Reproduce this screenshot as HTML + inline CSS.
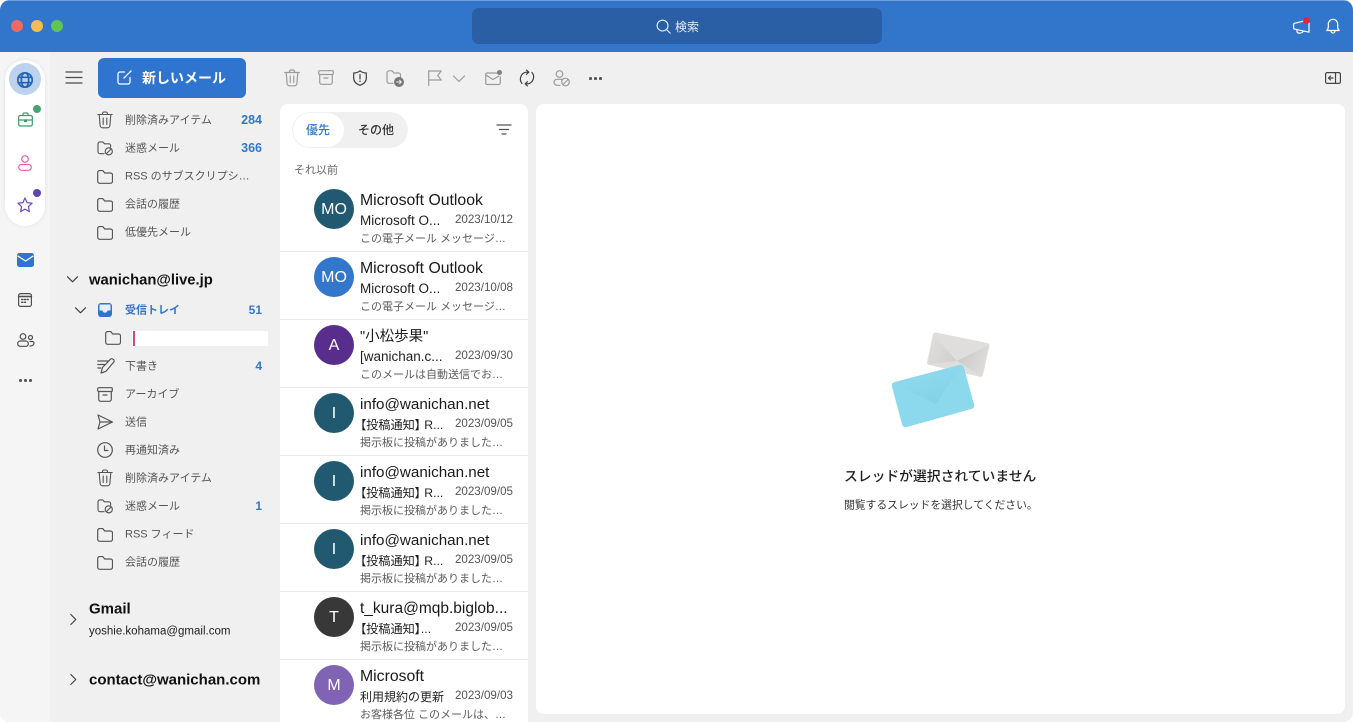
<!DOCTYPE html>
<html lang="ja"><head><meta charset="utf-8"><title>Outlook</title>
<style>
*{box-sizing:border-box}
html,body{margin:0;padding:0;width:1353px;height:722px;overflow:hidden;background:#fff;font-family:"Liberation Sans","Noto Sans CJK JP",sans-serif}
#win{position:absolute;left:0;top:0;width:1353px;height:722px;background:#f0f0f0;border-radius:10px;overflow:hidden}
.a{position:absolute;white-space:nowrap}
.t{position:absolute;white-space:nowrap;transform:translateY(-50%);line-height:1}
svg.i{position:absolute;fill:none;stroke:#555;stroke-width:1.2;stroke-linecap:round;stroke-linejoin:round;overflow:visible}
.l{font-size:11px;color:#555;left:125px;margin-top:.7px}
.n{font-size:12.5px;font-weight:700;color:#3277cc;right:1091px}
.row{position:absolute;left:280px;width:248px;height:68px;background:#fff}
.row:after{content:"";position:absolute;left:0;top:67px;width:248px;height:1.5px;background:#e9e9e9}
.row.e:after{display:none}
.av{position:absolute;left:34px;top:5px;width:40px;height:40px;border-radius:50%;color:#fff;font-size:16px;text-align:center;line-height:41px}
.nm{position:absolute;left:80px;top:7px;font-size:15.8px;line-height:20px;color:#1a1a1a;white-space:nowrap}
.nm.s{font-size:15.200px}
.sb{position:absolute;left:80px;top:26.500px;font-size:13.500px;line-height:20px;color:#1f1f1f;white-space:nowrap}
.sb.j{font-size:12.200px;font-feature-settings:"palt"}
.dt{position:absolute;right:15px;top:27px;font-size:11.6px;line-height:18px;color:#555;white-space:nowrap}
.pv{position:absolute;left:80px;top:46.500px;font-size:11px;line-height:16px;color:#5c5c5c;white-space:nowrap}
</style></head><body>
<svg width="0" height="0" style="position:absolute"><defs>
<symbol id="folder" viewBox="0 0 16 14"><path d="M.7 2.500a2 2 0 0 1 2-2h3l2 2.500h5.800a2 2 0 0 1 2 2v6.300a2 2 0 0 1-2 2H2.700a2 2 0 0 1-2-2z"/></symbol>
<symbol id="trash" viewBox="0 0 16 18"><path d="M.8 3.500h14.400M5.500 3.500V2.500a1.700 1.700 0 0 1 1.700-1.500h1.600a1.700 1.700 0 0 1 1.700 1.500v1M2.200 3.500l.9 11a2.500 2.500 0 0 0 2.500 2.300h4.800a2.500 2.500 0 0 0 2.500-2.300l.9-11M6.200 7v6.500M9.800 7v6.500"/></symbol>
<symbol id="junk" viewBox="0 0 18 16"><path d="M7.500 13.500H3a2 2 0 0 1-2-2V3a2 2 0 0 1 2-2h3l2 2h4.500a2 2 0 0 1 2 2v1.500"/><circle cx="12.500" cy="11" r="3.800"/><path d="M10 13.500l5-5"/></symbol>
<symbol id="archive" viewBox="0 0 16 15"><rect x=".7" y=".7" width="14.600" height="3.800" rx="1"/><path d="M1.700 4.500v7.800a2 2 0 0 0 2 2h8.600a2 2 0 0 0 2-2V4.500M6 8h4"/></symbol>
</defs></svg>
<div id="win">
<div class="a" style="left:0;top:0;width:1353px;height:52px;background:#3276cc;border-top:1px solid #6f9fdc"></div>
<div class="a" style="left:11px;top:20px;width:12px;height:12px;border-radius:50%;background:#ee6a5e"></div>
<div class="a" style="left:31px;top:20px;width:12px;height:12px;border-radius:50%;background:#f5bd4f"></div>
<div class="a" style="left:51px;top:20px;width:12px;height:12px;border-radius:50%;background:#61c554"></div>
<div class="a" style="left:472px;top:8px;width:410px;height:36px;border-radius:7px;background:#2a5ea5"></div>
<svg class="i" style="left:656px;top:19px;stroke:#e8eef8;stroke-width:1.200" width="15" height="15" viewBox="0 0 16 16"><circle cx="7" cy="7" r="5.800"/><path d="M11.200 11.200l4 4"/></svg>
<div class="t" style="left:675px;top:26.500px;font-size:12px;color:#e8eef8">検索</div>
<svg class="i" style="left:1293px;top:19px;stroke:#fff" width="17" height="15" viewBox="0 0 17 15"><path d="M2 4.200L16 .8v12.400L2 10.200A1.500 1.500 0 0 1 .6 8.700V5.700A1.500 1.500 0 0 1 2 4.200zM4 10.800c-.3 2 .3 3 1.500 3.200 1.800.3 4-.2 4.700-1.800"/></svg>
<div class="a" style="left:1303px;top:17px;width:7px;height:7px;border-radius:50%;background:#d9274a"></div>
<svg class="i" style="left:1326px;top:18px;stroke:#fff" width="14" height="16" viewBox="0 0 14 16"><path d="M.8 12.500c1.200-1 1.500-2 1.500-3.500V6a4.700 4.700 0 0 1 9.400 0v3c0 1.500.3 2.500 1.500 3.500zM5 12.800c0 3 4 3 4 0"/></svg>

<!-- rail -->
<div class="a" style="left:0;top:52px;width:50px;height:670px;background:#f5f5f5"></div>
<div class="a" style="left:5px;top:60px;width:40px;height:166px;border-radius:20px;background:#fff;box-shadow:0 0 4px rgba(0,0,0,.08)"></div>
<div class="a" style="left:9px;top:63px;width:32px;height:32px;border-radius:50%;background:#bdd2ee"></div>
<svg class="i" style="left:17px;top:72px;stroke:#2265b8;stroke-width:1.700" width="16" height="16" viewBox="0 0 16 16"><circle cx="8" cy="8" r="7.200"/><ellipse cx="8" cy="8" rx="3.700" ry="7.200"/><path d="M1.200 5.300h13.600M1.200 10.700h13.600"/></svg>
<svg class="i" style="left:18px;top:112px;stroke:#3c9c6c" width="15" height="15" viewBox="0 0 15 15"><rect x=".7" y="3.500" width="13.600" height="10.500" rx="1.500"/><path d="M5 3.500V2a1 1 0 0 1 1-1h3a1 1 0 0 1 1 1v1.500M.7 8h13.600"/><path d="M6.500 8h2v1.500h-2z" fill="#3c9c6c"/></svg>
<div class="a" style="left:33px;top:105px;width:8px;height:8px;border-radius:50%;background:#41a673"></div>
<svg class="i" style="left:18px;top:155px;stroke:#e85fb0" width="14" height="16" viewBox="0 0 14 16"><circle cx="7" cy="4" r="3.300"/><rect x=".7" y="9.500" width="12.600" height="5.800" rx="2.900"/></svg>
<svg class="i" style="left:17px;top:197px;stroke:#6a4bbd" width="16" height="16" viewBox="0 0 16 16"><path d="M8 1l2.100 4.600 5 .6-3.700 3.400 1 5L8 12.100 3.600 14.600l1-5L.9 6.200l5-.6z"/></svg>
<div class="a" style="left:33px;top:189px;width:8px;height:8px;border-radius:50%;background:#6245b0"></div>
<svg style="position:absolute;left:17px;top:253px" width="17" height="14" viewBox="0 0 17 14"><rect width="17" height="14" rx="2.500" fill="#2f74cf"/><path d="M.5 2.800l8 5.200 8-5.200" fill="none" stroke="#f5f5f5" stroke-width="1.300"/></svg>
<svg class="i" style="left:18px;top:293px;stroke:#4f4f4f" width="14" height="14" viewBox="0 0 14 14"><rect x=".6" y=".6" width="12.800" height="12.800" rx="2"/><path d="M.6 3.500h12.800" stroke-width="1.600"/><path d="M3.800 6.500h1M6.500 6.500h1M9.200 6.500h1M3.800 9.300h1M6.500 9.300h1" stroke-width="1.500"/></svg>
<svg class="i" style="left:17px;top:333px;stroke:#4f4f4f" width="18" height="14" viewBox="0 0 18 14"><circle cx="6" cy="3.500" r="2.800"/><rect x=".7" y="8" width="10.600" height="5.300" rx="2.600"/><circle cx="13.500" cy="4.500" r="2"/><path d="M13 8.500h2.500a1.500 1.500 0 0 1 1.500 1.500c0 1.800-1.500 3-4 3"/></svg>
<div class="a" style="left:19px;top:379px;width:2.600px;height:2.600px;border-radius:50%;background:#555;box-shadow:5px 0 #555,10px 0 #555"></div>

<!-- top of sidebar -->
<svg class="i" style="left:66px;top:71px;stroke:#4a4a4a" width="16" height="13" viewBox="0 0 16 13"><path d="M0 1h16M0 6.500h16M0 12h16"/></svg>
<div class="a" style="left:98px;top:58px;width:148px;height:40px;border-radius:6px;background:#2f74cf"></div>
<svg class="i" style="left:117px;top:70px;stroke:#fff;stroke-width:1.300" width="15" height="15" viewBox="0 0 15 15"><path d="M7.500 2H3a2 2 0 0 0-2 2v8a2 2 0 0 0 2 2h8a2 2 0 0 0 2-2V7.500M14 1L7 8"/></svg>
<div class="t" style="left:142px;top:78px;font-size:14px;font-weight:700;color:#fff">新しいメール</div>

<svg class="i" style="left:97px;top:111px;stroke-width:1.100" width="16" height="18" viewBox="0 0 16 18"><use href="#trash"/></svg>
<div class="t l" style="top:120.500px">削除済みアイテム</div><div class="t n" style="top:120px">284</div>
<svg class="i" style="left:97px;top:141px" width="17" height="15" viewBox="0 0 18 16"><use href="#junk"/></svg>
<div class="t l" style="top:148.500px">迷惑メール</div><div class="t n" style="top:148px">366</div>
<svg class="i" style="left:97px;top:170px" width="16" height="14" viewBox="0 0 16 14"><use href="#folder"/></svg>
<div class="t l" style="top:176.500px">RSS のサブスクリプシ…</div>
<svg class="i" style="left:97px;top:198px" width="16" height="14" viewBox="0 0 16 14"><use href="#folder"/></svg>
<div class="t l" style="top:204.500px">会話の履歴</div>
<svg class="i" style="left:97px;top:226px" width="16" height="14" viewBox="0 0 16 14"><use href="#folder"/></svg>
<div class="t l" style="top:232.500px">低優先メール</div>

<svg class="i" style="left:67px;top:276px;stroke:#444" width="11" height="7" viewBox="0 0 11 7"><path d="M.5.800l5 5 5-5"/></svg>
<div class="t" style="left:89px;top:280.500px;font-size:14.800px;font-weight:700;color:#111">wanichan@live.jp</div>
<svg class="i" style="left:75px;top:307px;stroke:#444" width="11" height="7" viewBox="0 0 11 7"><path d="M.5.800l5 5 5-5"/></svg>
<svg style="position:absolute;left:98px;top:303px" width="14" height="14" viewBox="0 0 14 14"><rect width="14" height="14" rx="3" fill="#2f74cf"/><path d="M1.500 1.500h11v6H9.500a2.500 2.200 0 0 1-5 0H1.500z" fill="#e6eef9"/></svg>
<div class="t" style="left:125px;top:311px;font-size:11px;font-weight:700;color:#3277cc">受信トレイ</div><div class="t n" style="top:310px;font-size:12px">51</div>
<svg class="i" style="left:105px;top:331px" width="16" height="14" viewBox="0 0 16 14"><use href="#folder"/></svg>
<div class="a" style="left:132px;top:331px;width:136px;height:15px;background:#fff"></div>
<div class="a" style="left:133px;top:331px;width:1.500px;height:15px;background:#d6457f"></div>
<svg class="i" style="left:97px;top:358px" width="17" height="16" viewBox="0 0 17 16"><path d="M.8 3h10M.8 6.500h6.500M.8 10h3M15.800 1.200a1.600 1.600 0 0 0-2.300 0L5.500 9.500l-1.500 5.500 5-1.700 7.800-9.300a1.800 1.800 0 0 0-1-2.800z"/></svg>
<div class="t l" style="top:366.500px">下書き</div><div class="t n" style="top:366px;font-size:12px">4</div>
<svg class="i" style="left:97px;top:387px" width="16" height="15" viewBox="0 0 16 15"><use href="#archive"/></svg>
<div class="t l" style="top:394.500px">アーカイブ</div>
<svg class="i" style="left:97px;top:414px" width="16" height="16" viewBox="0 0 16 16"><path d="M1 1l14.500 7L1 15l2-7zM3 8h12.500"/></svg>
<div class="t l" style="top:422.500px">送信</div>
<svg class="i" style="left:97px;top:442px" width="16" height="16" viewBox="0 0 16 16"><circle cx="8" cy="8" r="7.300"/><path d="M7.500 4v4.500h3.500"/></svg>
<div class="t l" style="top:450.500px">再通知済み</div>
<svg class="i" style="left:97px;top:469px;stroke-width:1.100" width="16" height="18" viewBox="0 0 16 18"><use href="#trash"/></svg>
<div class="t l" style="top:478.500px">削除済みアイテム</div>
<svg class="i" style="left:97px;top:499px" width="17" height="15" viewBox="0 0 18 16"><use href="#junk"/></svg>
<div class="t l" style="top:506.500px">迷惑メール</div><div class="t n" style="top:506px;font-size:12px">1</div>
<svg class="i" style="left:97px;top:528px" width="16" height="14" viewBox="0 0 16 14"><use href="#folder"/></svg>
<div class="t l" style="top:534.500px">RSS フィード</div>
<svg class="i" style="left:97px;top:556px" width="16" height="14" viewBox="0 0 16 14"><use href="#folder"/></svg>
<div class="t l" style="top:562.500px">会話の履歴</div>
<svg class="i" style="left:70px;top:614px;stroke:#444" width="6" height="11" viewBox="0 0 6 11"><path d="M.8.500l5 5-5 5"/></svg>
<div class="t" style="left:89px;top:609px;font-size:15px;font-weight:700;color:#111">Gmail</div>
<div class="t" style="left:89px;top:632px;font-size:11.500px;color:#222">yoshie.kohama@gmail.com</div>
<svg class="i" style="left:70px;top:674px;stroke:#444" width="6" height="11" viewBox="0 0 6 11"><path d="M.8.500l5 5-5 5"/></svg>
<div class="t" style="left:89px;top:680px;font-size:15px;font-weight:700;color:#111">contact@wanichan.com</div>

<!-- toolbar -->
<svg class="i" style="left:284px;top:69px;stroke:#9b9b9b" width="16" height="18" viewBox="0 0 16 18"><use href="#trash"/></svg>
<svg class="i" style="left:318px;top:70px;stroke:#9b9b9b" width="16" height="15" viewBox="0 0 16 15"><use href="#archive"/></svg>
<svg class="i" style="left:353px;top:70px;stroke:#3f3f3f" width="14" height="16" viewBox="0 0 14 16"><path d="M7 .8c1.500 1.300 3.700 2.100 6.300 2.200v5c0 3.500-2.500 6-6.300 7.300C3.200 14 .7 11.500.7 8V3C3.300 2.900 5.500 2.100 7 .8zM7 4.500v4.500M7 11v.6"/></svg>
<svg class="i" style="left:386px;top:70px;stroke:#9b9b9b" width="16" height="14" viewBox="0 0 16 14"><path d="M7 13.300H3a2 2 0 0 1-2-2V2.800a2 2 0 0 1 2-2h3l2 2.200h4.500a2 2 0 0 1 2 2v2"/></svg>
<svg style="position:absolute;left:394px;top:77px" width="10" height="10" viewBox="0 0 10 10"><circle cx="5" cy="5" r="5" fill="#777"/><path d="M2.300 5h5M5.300 3l2 2-2 2" fill="none" stroke="#f0f0f0" stroke-width="1"/></svg>
<svg class="i" style="left:428px;top:70px;stroke:#9b9b9b" width="14" height="16" viewBox="0 0 14 16"><path d="M.7 15.500V1h12.500l-3.500 4.500 3.500 4.500H.7"/></svg>
<svg class="i" style="left:453px;top:75px;stroke:#9b9b9b" width="12" height="8" viewBox="0 0 12 8"><path d="M.5 1l5.500 5.500L11.500 1"/></svg>
<svg class="i" style="left:485px;top:71px;stroke:#9b9b9b" width="16" height="14" viewBox="0 0 16 14"><path d="M15.300 6v6a1.500 1.500 0 0 1-1.500 1.500H2.200A1.500 1.500 0 0 1 .7 12V3.500A1.500 1.500 0 0 1 2.200 2h9.800M.9 4l7 4.500L14 5"/></svg>
<div class="a" style="left:497px;top:70px;width:5px;height:5px;border-radius:50%;background:#808080"></div>
<svg class="i" style="left:519px;top:69px;stroke:#3f3f3f" width="16" height="18" viewBox="0 0 16 18"><path d="M3 14.500a7 7 0 0 1 4-11.300h2M13 3.500a7 7 0 0 1-4 11.300H7M7.500 1L9.800 3.200 7.500 5.300M8.500 12.700L6.200 14.800l2.300 2.200"/></svg>
<svg class="i" style="left:553px;top:70px;stroke:#9b9b9b" width="17" height="17" viewBox="0 0 17 17"><circle cx="6.500" cy="4" r="3.300"/><path d="M7 15.300H4a3 3 0 0 1 0-6h5"/><circle cx="12.500" cy="12" r="3.800"/><path d="M10 14.500l5-5"/></svg>
<div class="a" style="left:589px;top:77px;width:2.600px;height:2.600px;border-radius:50%;background:#555;box-shadow:5px 0 #555,10px 0 #555"></div>
<svg class="i" style="left:1325px;top:72px;stroke:#444" width="16" height="12" viewBox="0 0 16 12"><rect x=".6" y=".6" width="14.800" height="10.800" rx="1.500"/><path d="M10.500.6v10.800"/><path d="M8 6H3.500M5.500 4L3.500 6l2 2"/></svg>

<!-- list panel -->
<div class="a" style="left:280px;top:104px;width:248px;height:618px;background:#fff;border-radius:8px 8px 0 0"></div>
<div class="a" style="left:292px;top:112px;width:116px;height:36px;border-radius:18px;background:#f0f0f0"></div>
<div class="a" style="left:293px;top:113px;width:51px;height:34px;border-radius:17px;background:#fff"></div>
<div class="t" style="left:306px;top:130px;font-size:12px;font-weight:500;color:#3277cc">優先</div>
<div class="t" style="left:358px;top:130px;font-size:12px;font-weight:500;color:#333">その他</div>
<svg class="i" style="left:497px;top:124px;stroke:#555;stroke-width:1.300" width="14" height="11" viewBox="0 0 14 11"><path d="M0 1h14M2.500 5.500h9M5 10h4"/></svg>
<div class="t" style="left:294px;top:170.500px;font-size:11px;color:#666">それ以前</div>

<div class="row" style="top:184px"><div class="av" style="background:#215a70">MO</div><div class="nm">Microsoft Outlook</div><div class="sb">Microsoft O...</div><div class="dt">2023/10/12</div><div class="pv">この電子メール メッセージ…</div></div>
<div class="row" style="top:252px"><div class="av" style="background:#3277cc">MO</div><div class="nm">Microsoft Outlook</div><div class="sb">Microsoft O...</div><div class="dt">2023/10/08</div><div class="pv">この電子メール メッセージ…</div></div>
<div class="row" style="top:320px"><div class="av" style="background:#592d8c">A</div><div class="nm" style="font-size:14.500px">"小松歩果"</div><div class="sb">[wanichan.c...</div><div class="dt">2023/09/30</div><div class="pv">このメールは自動送信でお…</div></div>
<div class="row" style="top:388px"><div class="av" style="background:#215a70">I</div><div class="nm s">info@wanichan.net</div><div class="sb j">【投稿通知】 R...</div><div class="dt">2023/09/05</div><div class="pv">掲示板に投稿がありました…</div></div>
<div class="row" style="top:456px"><div class="av" style="background:#215a70">I</div><div class="nm s">info@wanichan.net</div><div class="sb j">【投稿通知】 R...</div><div class="dt">2023/09/05</div><div class="pv">掲示板に投稿がありました…</div></div>
<div class="row" style="top:524px"><div class="av" style="background:#215a70">I</div><div class="nm s">info@wanichan.net</div><div class="sb j">【投稿通知】 R...</div><div class="dt">2023/09/05</div><div class="pv">掲示板に投稿がありました…</div></div>
<div class="row" style="top:592px"><div class="av" style="background:#383838">T</div><div class="nm" style="font-size:15.500px">t_kura@mqb.biglob...</div><div class="sb j">【投稿通知】...</div><div class="dt">2023/09/05</div><div class="pv">掲示板に投稿がありました…</div></div>
<div class="row e" style="top:660px"><div class="av" style="background:#8063b5">M</div><div class="nm">Microsoft</div><div class="sb" style="font-size:12px">利用規約の更新</div><div class="dt">2023/09/03</div><div class="pv">お客様各位 このメールは、…</div></div>

<!-- reading pane -->
<div class="a" style="left:536px;top:104px;width:809px;height:610px;background:#fff;border-radius:8px"></div>
<svg style="position:absolute;left:885px;top:328px" width="112" height="106" viewBox="0 0 112 106">
<defs>
<linearGradient id="g1" x1="72" y1="32" x2="48" y2="12" gradientUnits="userSpaceOnUse"><stop offset="0" stop-color="#d0cfcd"/><stop offset="1" stop-color="#dedddb"/></linearGradient>
<linearGradient id="g2" x1="72" y1="32" x2="100" y2="44" gradientUnits="userSpaceOnUse"><stop offset="0" stop-color="#cbcac8"/><stop offset="1" stop-color="#dedddb"/></linearGradient>
<linearGradient id="g3" x1="51" y1="76" x2="42" y2="48" gradientUnits="userSpaceOnUse"><stop offset="0" stop-color="#82d2e7"/><stop offset="1" stop-color="#8cd8ec"/></linearGradient>
</defs>
<path d="M50.500 7L102 17.500 95.500 46.500 44.500 34.500z" fill="#dfdedc" stroke="#dfdedc" stroke-width="5" stroke-linejoin="round"/>
<path d="M48 6L72 33 43 36z" fill="url(#g1)"/>
<path d="M103.500 17L72 33 96 48z" fill="url(#g2)"/>
<path d="M10.300 57.500L75.500 40.300 85.700 77.500 20.500 95.700z" fill="#8cd8ec" stroke="#8cd8ec" stroke-width="7" stroke-linejoin="round"/>
<path d="M7 55.500L51 76 77 37z" fill="url(#g3)"/>
</svg>
<div class="t" style="left:844px;top:477px;font-size:13.800px;font-weight:500;color:#1f1f1f">スレッドが選択されていません</div>
<div class="t" style="left:844px;top:506px;font-size:10.800px;color:#333">閲覧するスレッドを選択してください。</div>
</div>
</body></html>
